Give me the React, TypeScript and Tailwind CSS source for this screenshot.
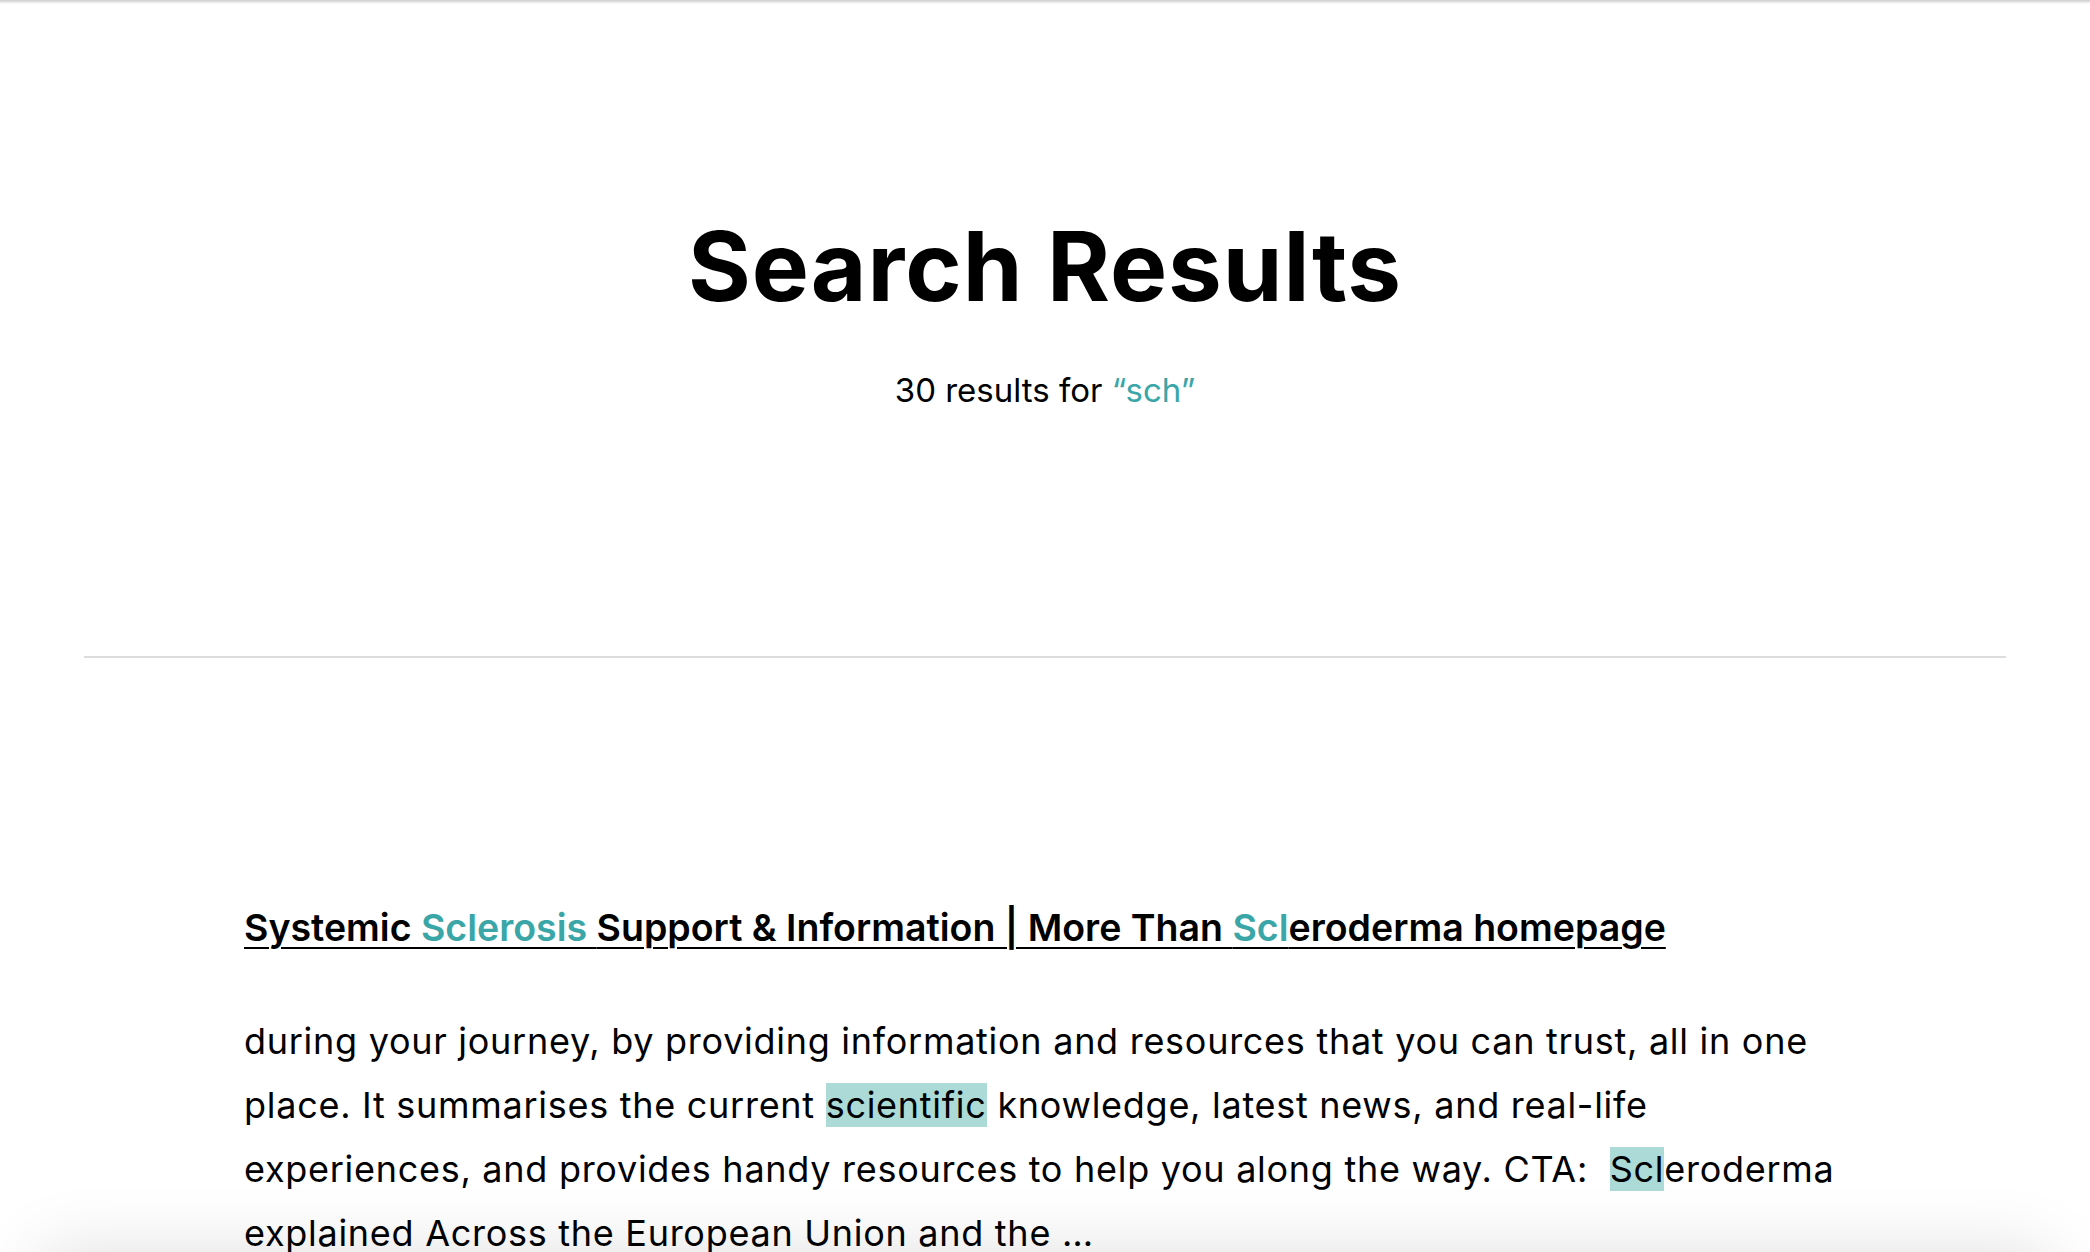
export default function App() {
  return (
    <div className="relative min-h-screen overflow-hidden bg-white font-['Inter',sans-serif] text-black">
      {/* header shadow peeking in at the top */}
      <div className="fixed inset-x-0 top-0 h-[4px] bg-gradient-to-b from-[#cdcdcd] to-white" />

      <header className="pt-[218px] text-center">
        <h1 className="text-[96px] font-bold leading-none tracking-[0.01em]">Search Results</h1>
        <p className="mt-[52px] text-[33px] leading-[1.5]">
          30 results for <span className="text-[#3aa6a8]">“sch”</span>
        </p>
      </header>

      <div className="mx-[84px] mt-[240px] h-[2px] bg-[#dcdcdc]" />

      <section className="px-[244px] pt-[242px]">
        <a
          href="#"
          className="text-[37.5px] font-semibold leading-[1.5] underline decoration-black decoration-[2px] underline-offset-[6px]"
        >
          Systemic <span className="text-[#3aa6a8]">Sclerosis </span>Support &amp; Information | More Than{" "}
          <span className="text-[#3aa6a8]">Scl</span>eroderma homepage
        </a>
        <p className="mt-[53px] text-[36px] leading-[64px] tracking-[0.02em]">
          during your journey, by providing information and resources that you can trust, all in one place. It
          summarises the current <span className="bg-[#abdad7]">scientific</span> knowledge, latest news, and
          real-life experiences, and provides handy resources to help you along the way. CTA:&nbsp;{" "}
          <span className="bg-[#abdad7]">Scl</span>eroderma explained Across the European Union and the …
        </p>
      </section>

      {/* shadow of a panel sitting just below the fold */}
      <div className="fixed bottom-[-90px] left-[40px] right-[40px] h-[90px] rounded-xl bg-white shadow-[0_0_70px_rgba(0,0,0,0.13)]" />
    </div>
  );
}
